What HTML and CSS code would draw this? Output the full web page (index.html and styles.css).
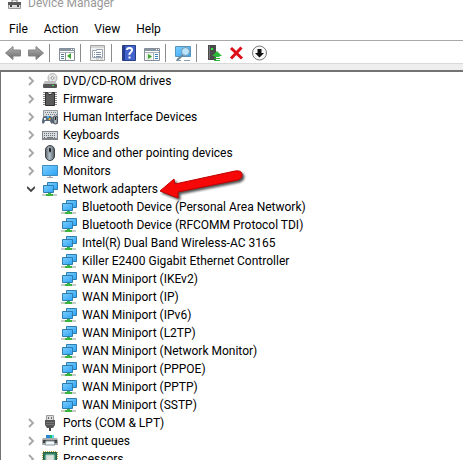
FILE: index.html
```html
<!DOCTYPE html>
<html lang="en">
<head>
<meta charset="utf-8">
<title>Device Manager</title>
<link rel="stylesheet" href="styles.css">
</head>
<body>
<svg class="sprite" aria-hidden="true">
  <defs>
    <linearGradient id="blue" x1="0" y1="0" x2="1" y2="1"><stop offset="0" stop-color="#7dcfff"/><stop offset="1" stop-color="#2da3f5"/></linearGradient>
    <linearGradient id="steel" x1="0" y1="0" x2="1" y2="0"><stop offset="0" stop-color="#596066"/><stop offset=".45" stop-color="#b4c2cc"/><stop offset="1" stop-color="#555c62"/></linearGradient>
    <linearGradient id="grey" x1="0" y1="0" x2="0" y2="1"><stop offset="0" stop-color="#b4b4b4"/><stop offset="1" stop-color="#686868"/></linearGradient>
  </defs>
  <symbol id="closed" viewBox="0 0 8 10"><path d="M2 1l4 4-4 4" fill="none" stroke="#a6a6a6" stroke-width="1.8"/></symbol>
  <symbol id="open" viewBox="0 0 8 10"><path d="M0 3l4 4 4-4" fill="none" stroke="#404040" stroke-width="1.8"/></symbol>
  <symbol id="manager" viewBox="0 0 16 16"><path d="M5 6V4h5v2" fill="none" stroke="#777"/><path d="M1.500 6.500h12v6h-12z" fill="#ddd" stroke="#999"/><path d="M1 6h13v3H1z" fill="#5a5a5a"/><path d="M3 9h2v2H3zM10 9h2v2h-2z" fill="#444"/></symbol>
  <symbol id="disc" viewBox="0 0 16 16"><circle cx="10.500" cy="5" r="4.500" fill="#dedede" stroke="#b5b5b5"/><path d="M7 2l3 3 3-3M8 8l2-3 3 4" fill="none" stroke="#f8f8f8"/><circle cx="10.500" cy="5" r="1.400" fill="#fff" stroke="#999"/><path d="M3 8h10l2 3H1z" fill="#bcbcbc"/><rect x="1" y="11" width="14" height="4" rx="1" fill="#555"/><path d="M10 12h2v1h-2z" fill="#45e245"/></symbol>
  <symbol id="chip" viewBox="0 0 16 16"><path d="M1 1.500h14M1 3.500h14M1 5.500h14M1 7.500h14M1 9.500h14M1 11.500h14M1 13.500h14" stroke="#888"/><path d="M3.500 1.500h2q0 2 2.500 2t2.500-2h2v13h-9z" fill="#5a5a5a" stroke="#303030"/></symbol>
  <symbol id="keyboard" viewBox="0 0 16 16"><path d="M0 4h16v9H0z" fill="#7f858a"/><path d="M1 5h14v6H1z" fill="#d9dde0"/><path d="M2 6.500h12M2 8.500h12M2 10.500h2M12 10.500h2" stroke="#687078" stroke-dasharray="1 1"/><path d="M5 10.500h6" stroke="#777"/></symbol>
  <symbol id="hid" viewBox="0 0 16 16"><path d="M1.500 1.500h14v7h-14z" fill="#d9dde0" stroke="#959ba0"/><path d="M3 3.500h12M4 5.500h11" stroke="#7c8287" stroke-dasharray="1 1"/><path d="M0 14q0-7 3-7h5q3 0 3 7-2 2-3-2H3q-1 4-3 2z" fill="#596879"/><path d="M2 9h2v2H2z" fill="#dce8ee"/><path d="M5 7h2v2H5z" fill="#43baff"/><circle cx="7.500" cy="10" r="1" fill="#ffb52a"/><rect x="11" y="7" width="5" height="8" rx="2.500" fill="url(#steel)" stroke="#424950"/><path d="M13.500 8v3" stroke="#222"/></symbol>
  <symbol id="mouse" viewBox="0 0 16 16"><rect x="3.500" y=".5" width="9" height="15" rx="4.500" fill="url(#steel)" stroke="#3b4045"/><path d="M8 1v7" stroke="#697178"/><rect x="7" y="3" width="2" height="4" rx="1" fill="#222"/></symbol>
  <symbol id="monitor" viewBox="0 0 16 16"><path d="M.5 2.500h15v10H.5z" fill="url(#blue)" stroke="#3d8cc0"/><path d="M7 13h2v1H7z" fill="#bbb"/><path d="M5 14.500h6" stroke="#aaa"/></symbol>
  <symbol id="network" viewBox="0 0 16 16"><path d="M5.500 1.500h10v7h-10z" fill="url(#blue)" stroke="#2f7dae"/><path d="M1.500 4.500h10v7h-10z" fill="url(#blue)" stroke="#2f7dae"/><path d="M0 13h15v2H0z" fill="#c9cdca"/><path d="M6 12h3v1h2v2H4v-2h2z" fill="#39b540"/></symbol>
  <symbol id="port" viewBox="0 0 16 16"><path d="M4.500.5h7V6h-7z" fill="#ddd" stroke="#999"/><path d="M6 2h1v2H6zM9 2h1v2H9z" fill="#666"/><path d="M3 5h10v5l-2 3H5l-2-3z" fill="#555"/><path d="M4 7.500h8M4 9.500h8" stroke="#777"/><path d="M7 13h2v3H7z" fill="#444"/></symbol>
  <symbol id="printer" viewBox="0 0 16 16"><path d="M4 2h8v4H4z" fill="#2589d7"/><path d="M8 2h2v3H8z" fill="#24be66"/><path d="M10 2h2v3h-2z" fill="#55d6ef"/><path d="M1 5h14l1 2v5H0V7z" fill="#aaa"/><path d="M1 7h14v3H1z" fill="#444"/><path d="M4 8h8l1 4H3z" fill="#f4f7f9" stroke="#8999a3"/></symbol>
  <symbol id="cpu" viewBox="0 0 16 16"><path d="M1 1h14v14H1z" fill="none" stroke="#bba543" stroke-width="2" stroke-dasharray="1 1"/><path d="M1.500 1.500h13v13h-13z" fill="#328062" stroke="#246047"/><path d="M4 4h8v8H4z" fill="#dce3df" stroke="#acd0bf"/></symbol>
  <symbol id="back" viewBox="0 0 16 16"><path d="M.5 8L8 1.500V5h7.500v6H8v3.500z" fill="url(#grey)" stroke="#858585"/></symbol>
  <symbol id="forward" viewBox="0 0 16 16"><path d="M15.500 8L8 1.500V5H.5v6H8v3.500z" fill="url(#grey)" stroke="#858585"/></symbol>
  <symbol id="console" viewBox="0 0 16 16"><path d="M.5 3.500h15v12H.5z" fill="#fff" stroke="#858e98"/><path d="M1 4h14v2H1z" fill="#8795a3"/><path d="M12 4h1v1h-1zM14 4h1v1h-1z" fill="#fff"/><path d="M1 7.500h14" stroke="#aab2b9"/><path d="M6.500 8v7" stroke="#858e98"/><path d="M2 9.500h3M2 11.500h3M2 13.500h3" stroke="#527b9c"/><path d="M12 8v6L8 11z" fill="#3ca72e"/></symbol>
  <symbol id="properties" viewBox="0 0 16 16"><path d="M.5.5h14v15H.5z" fill="#f1f1f1" stroke="#a2a2a2"/><path d="M1 2h13" stroke="#bbb"/><path d="M2.500 5.500h4v-1h6v8h-10z" fill="#fff" stroke="#9aa5b0"/><path d="M4 7.500h1M6 7.500h5M4 9.500h1M6 9.500h5M4 11.500h1M6 11.500h5" stroke="#8293a5"/><path d="M6 14h3M10 14h3" stroke="#bbb"/></symbol>
  <symbol id="help" viewBox="0 0 16 16"><path d="M1.500.5h13v15h-13z" fill="#4262cc" stroke="#294083"/><path d="M2 1h2v14H2z" fill="#263e92"/><path d="M6 5q0-2 2.500-2T11 5q0 1.500-1.500 2.500T8.500 10" fill="none" stroke="#fff" stroke-width="2"/><path d="M7.500 11.500h2v2h-2z" fill="#fff"/></symbol>
  <symbol id="action" viewBox="0 0 16 16"><path d="M.5 3.500h15v12H.5z" fill="#fff" stroke="#858e98"/><path d="M1 4h14v2H1z" fill="#8795a3"/><path d="M12 4h1v1h-1zM14 4h1v1h-1z" fill="#fff"/><path d="M1 7.500h14M9.500 8v7" stroke="#aab2b9"/><path d="M2 8h6v7H2z" fill="#e9efe7"/><path d="M4 9v5l4-2.500z" fill="#3ca72e"/><path d="M11 9.500h3M11 11.500h3M11 13.500h3" stroke="#3682c2"/></symbol>
  <symbol id="scan" viewBox="0 0 16 16"><path d="M.5 1.500h15v10H.5z" fill="url(#blue)" stroke="#5795bd"/><path d="M1 15.500h5M9 15.500h6" stroke="#8b9daa"/><path d="M8 10l-6 5" stroke="#6c8798" stroke-width="2"/><circle cx="10.500" cy="6.500" r="4" fill="#b9e4fb" stroke="#7897ac"/></symbol>
  <symbol id="update" viewBox="0 0 16 16"><path d="M2 0h8v15H2z" fill="#4a4a4a"/><path d="M3 1h1v13H3z" fill="#777"/><path d="M5 3h2v2H5z" fill="#38f246"/><path d="M11 6l5 5h-2.500v1h-5v-1H6z" fill="#2bb937"/><path d="M8 13.500h6M8 15.500h6" stroke="#2bb937"/></symbol>
  <symbol id="remove" viewBox="0 0 16 16"><path d="M2 3l11 10.500M12.500 2.500L2 13.500" stroke="#dc0f18" stroke-width="3"/></symbol>
  <symbol id="disable" viewBox="0 0 16 16"><circle cx="7.500" cy="8" r="7" fill="#f8f8f8" stroke="#777"/><path d="M5.500 4h4v4H12l-4.500 4.500L3 8h2.500z" fill="#111"/></symbol>
</svg>
<div class="window">
  <header class="titlebar"><svg class="icon"><use href="#manager"/></svg><span>Device Manager</span></header>
  <nav class="menu"><button>File</button><button>Action</button><button>View</button><button>Help</button></nav>
  <div class="toolbar" role="toolbar">
    <button aria-label="Back"><svg class="icon"><use href="#back"/></svg></button>
    <button aria-label="Forward"><svg class="icon"><use href="#forward"/></svg></button>
    <span class="separator"></span>
    <button aria-label="Show console tree"><svg class="icon"><use href="#console"/></svg></button>
    <span class="separator"></span>
    <button aria-label="Properties"><svg class="icon"><use href="#properties"/></svg></button>
    <span class="separator"></span>
    <button aria-label="Help"><svg class="icon"><use href="#help"/></svg></button>
    <button aria-label="Show action pane"><svg class="icon"><use href="#action"/></svg></button>
    <span class="separator"></span>
    <button aria-label="Scan for hardware changes"><svg class="icon"><use href="#scan"/></svg></button>
    <span class="separator"></span>
    <button aria-label="Update driver"><svg class="icon"><use href="#update"/></svg></button>
    <button aria-label="Uninstall device"><svg class="icon"><use href="#remove"/></svg></button>
    <button aria-label="Disable device"><svg class="icon"><use href="#disable"/></svg></button>
  </div>
  <main class="pane">
    <ul class="tree">
      <li><div class="row"><button class="toggle" aria-label="Expand"><svg><use href="#closed"/></svg></button><svg class="icon"><use href="#disc"/></svg><span>DVD/CD-ROM drives</span></div></li>
      <li><div class="row"><button class="toggle" aria-label="Expand"><svg><use href="#closed"/></svg></button><svg class="icon"><use href="#chip"/></svg><span>Firmware</span></div></li>
      <li><div class="row"><button class="toggle" aria-label="Expand"><svg><use href="#closed"/></svg></button><svg class="icon"><use href="#hid"/></svg><span>Human Interface Devices</span></div></li>
      <li><div class="row"><button class="toggle" aria-label="Expand"><svg><use href="#closed"/></svg></button><svg class="icon"><use href="#keyboard"/></svg><span>Keyboards</span></div></li>
      <li><div class="row"><button class="toggle" aria-label="Expand"><svg><use href="#closed"/></svg></button><svg class="icon"><use href="#mouse"/></svg><span>Mice and other pointing devices</span></div></li>
      <li><div class="row"><button class="toggle" aria-label="Expand"><svg><use href="#closed"/></svg></button><svg class="icon"><use href="#monitor"/></svg><span>Monitors</span></div></li>
      <li>
        <div class="row"><button class="toggle" aria-label="Collapse"><svg><use href="#open"/></svg></button><svg class="icon"><use href="#network"/></svg><span>Network adapters</span>
          <svg class="pointer" viewBox="0 0 92 36" aria-hidden="true"><path d="M2 23L16 11l1 5L77 3q6-1 7 3t-4 6L20 24v6z" fill="#f60808" stroke="#c00000"/></svg>
        </div>
        <ul class="children">
          <li class="row"><svg class="icon"><use href="#network"/></svg><span>Bluetooth Device (Personal Area Network)</span></li>
          <li class="row"><svg class="icon"><use href="#network"/></svg><span>Bluetooth Device (RFCOMM Protocol TDI)</span></li>
          <li class="row"><svg class="icon"><use href="#network"/></svg><span>Intel(R) Dual Band Wireless-AC 3165</span></li>
          <li class="row"><svg class="icon"><use href="#network"/></svg><span>Killer E2400 Gigabit Ethernet Controller</span></li>
          <li class="row"><svg class="icon"><use href="#network"/></svg><span>WAN Miniport (IKEv2)</span></li>
          <li class="row"><svg class="icon"><use href="#network"/></svg><span>WAN Miniport (IP)</span></li>
          <li class="row"><svg class="icon"><use href="#network"/></svg><span>WAN Miniport (IPv6)</span></li>
          <li class="row"><svg class="icon"><use href="#network"/></svg><span>WAN Miniport (L2TP)</span></li>
          <li class="row"><svg class="icon"><use href="#network"/></svg><span>WAN Miniport (Network Monitor)</span></li>
          <li class="row"><svg class="icon"><use href="#network"/></svg><span>WAN Miniport (PPPOE)</span></li>
          <li class="row"><svg class="icon"><use href="#network"/></svg><span>WAN Miniport (PPTP)</span></li>
          <li class="row"><svg class="icon"><use href="#network"/></svg><span>WAN Miniport (SSTP)</span></li>
        </ul>
      </li>
      <li><div class="row"><button class="toggle" aria-label="Expand"><svg><use href="#closed"/></svg></button><svg class="icon"><use href="#port"/></svg><span>Ports (COM &amp; LPT)</span></div></li>
      <li><div class="row"><button class="toggle" aria-label="Expand"><svg><use href="#closed"/></svg></button><svg class="icon"><use href="#printer"/></svg><span>Print queues</span></div></li>
      <li><div class="row"><button class="toggle" aria-label="Expand"><svg><use href="#closed"/></svg></button><svg class="icon"><use href="#cpu"/></svg><span>Processors</span></div></li>
    </ul>
  </main>
</div>
</body>
</html>
```
FILE: styles.css
```css
* { box-sizing: border-box; }
body {
  margin: 0;
  overflow: hidden;
  background: #fff;
  color: #000;
  font: 12px/18px Roboto, "Open Sans", sans-serif;
}
button {
  padding: 0;
  border: 0;
  background: none;
  color: inherit;
  font: inherit;
}
ul { margin: 0; padding: 0; list-style: none; }
.sprite { position: absolute; width: 0; height: 0; }
.window {
  display: flex;
  flex-direction: column;
  height: 100vh;
  overflow: hidden;
}
.icon { flex: none; display: block; width: 16px; height: 16px; }
.titlebar {
  flex: none;
  display: flex;
  align-items: flex-end;
  gap: 5px;
  height: 12px;
  padding-left: 7px;
  color: #999;
}
.menu {
  flex: none;
  display: flex;
  gap: 16px;
  height: 29px;
  padding: 8px 9px 2px;
  border-bottom: 1px solid #a9a9a9;
}
.toolbar {
  flex: none;
  display: flex;
  align-items: center;
  height: 23px;
  padding: 2px 0 0 1px;
  border-bottom: 1px solid #d9d9d9;
}
.toolbar button {
  display: flex;
  justify-content: center;
  width: 23px;
}
.separator { width: 1px; height: 18px; margin: 0 5px 0 2px; background: #8c8c8c; }
.pane {
  flex: 1;
  min-height: 0;
  border-top: 6px solid #eee;
}
.tree {
  height: 100%;
  overflow: hidden;
  border-top: 2px solid #737373;
  border-left: 1px solid #737373;
}
.row {
  position: relative;
  display: flex;
  align-items: center;
  gap: 5px;
  height: 18px;
  padding-left: 23px;
  white-space: nowrap;
}
.children .row { padding-left: 60px; }
.toggle { flex: none; width: 13px; height: 18px; }
.toggle svg { display: block; width: 8px; height: 10px; margin: auto; }
.pointer {
  position: absolute;
  left: 157px;
  top: -12px;
  width: 92px;
  height: 36px;
  filter: drop-shadow(2px 2px 1px #555);
}
```
